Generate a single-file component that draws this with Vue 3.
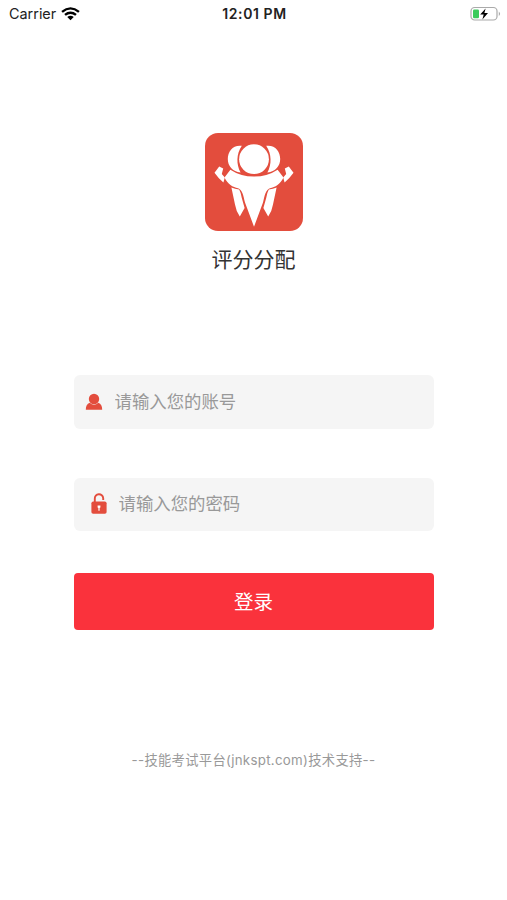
<script setup>
import { ref } from 'vue'

const account = ref('')
const password = ref('')
</script>

<template>
  <div class="screen">
    <header class="status">
      <div class="carrier">
        <span>Carrier</span>
        <svg class="wifi" viewBox="0 0 18 14" width="19" height="14" preserveAspectRatio="none">
          <path d="M1 4.8Q9-2 17 4.8M3.8 7.8Q9 3.6 14.2 7.8" fill="none" stroke="#000" stroke-width="2.3" />
          <path d="M5.9 10Q9 7.5 12.1 10L9 13.2Z" />
        </svg>
      </div>
      <span class="time">12:01 PM</span>
      <div class="power">
        <svg viewBox="0 0 32 16" width="32" height="16">
          <rect x="1" y="1.5" width="26" height="12.5" rx="3.6" fill="#fff" stroke="#aaa" stroke-width="1.2" />
          <path d="M28.8 5.4q2.6 2.3 0 4.6z" fill="#aaa" />
          <rect x="3" y="3.5" width="6" height="8.8" rx="1.3" fill="#3acb5b" />
          <path d="M15.6 2.4L10.2 8.4h3.5l-1.3 5 5.6-6.4h-3.6z" />
        </svg>
      </div>
    </header>

    <main class="content">
      <svg class="logo" viewBox="0 0 98 98" width="98" height="98">
        <rect width="98" height="98" rx="13" fill="#e34d3d" />
        <g fill="#fff">
          <circle cx="49" cy="26.2" r="14.9" />
          <g id="side">
            <path d="M36.8 12.8C28 11.6 22.8 18.4 22.8 26 22.8 33 27.5 38.6 35.6 39.6 31.2 31.5 31.2 21 36.8 12.8Z" />
            <path d="M9.5 39.7 14.2 33.6 18.2 35.4 16.8 41 19.8 44.4 18.4 49.4Q13.5 45.5 9.5 39.7Z" />
            <path d="M26.4 54.6Q30 56 34.2 56.6 36 60 36.8 65L39.6 75 34.8 83.4Q31 78 30 71.5Z" />
          </g>
          <use href="#side" transform="matrix(-1 0 0 1 98 0)" />
          <path d="M25.4 36.8Q35.5 43.6 49 43.6T72.6 36.8L78.5 44.4C75.5 51 70 54.2 65 55.2 60.5 56.8 59.6 63 58 69.5L49 93.8 40 69.5C38.4 63 37.5 56.8 33 55.2 28 54.2 22.5 51 19.5 44.4Z" />
        </g>
      </svg>
      <h1 class="title">评分分配</h1>

      <form class="form" @submit.prevent>
        <label class="field account">
          <svg viewBox="0 0 18 18" width="18" height="18" fill="#e34d3d">
            <circle cx="9" cy="6" r="5.2" />
            <path d="M.8 16.8C.8 13.2 2 10.8 4.7 9.8Q9 13.6 13.3 9.8C16 10.8 17.2 13.2 17.2 16.8Z" />
          </svg>
          <input v-model="account" type="text" placeholder="请输入您的账号" />
        </label>
        <label class="field password">
          <svg viewBox="0 0 16 22" width="16" height="22">
            <path d="M3.8 9V5.8a4.2 4.2 0 0 1 8.4-.6V7" fill="none" stroke="#e34d3d" stroke-width="1.9" />
            <rect x=".4" y="8.4" width="15.2" height="12.4" rx="1.8" fill="#e34d3d" />
            <path d="M6.6 12.4h2.8v2l-.8.7v2.7H7.4v-2.7l-.8-.7z" fill="#fff" />
          </svg>
          <input v-model="password" type="password" placeholder="请输入您的密码" />
        </label>
        <button class="login" type="submit">登录</button>
      </form>
    </main>

    <footer class="support">--技能考试平台(jnkspt.com)技术支持--</footer>
  </div>
</template>

<style>
body {
  margin: 0;
  background: #fff;
}
</style>

<style scoped>
.screen {
  width: 507px;
  height: 900px;
  box-sizing: border-box;
  display: flex;
  flex-direction: column;
  background: #fff;
  color: #333;
  font-family: Inter, "Noto Sans CJK SC", sans-serif;
}
.status {
  height: 27px;
  box-sizing: border-box;
  padding: 0 7px 0 9px;
  display: grid;
  grid-template-columns: 1fr auto 1fr;
  align-items: center;
  color: #222;
  font-size: 14.4px;
}
.carrier {
  display: flex;
  align-items: center;
  gap: 5px;
}
.wifi {
  display: block;
}
.time {
  font-weight: 600;
  font-size: 14px;
  letter-spacing: 0.6px;
}
.power {
  display: flex;
  justify-content: flex-end;
  margin-right: -2px;
}
.content {
  display: flex;
  flex-direction: column;
  align-items: center;
  padding-top: 106px;
}
.logo {
  display: block;
}
.title {
  margin: 13.5px 0 0;
  font-size: 21px;
  line-height: 30px;
  font-weight: 400;
}
.form {
  width: 360px;
  margin-top: 100px;
  display: flex;
  flex-direction: column;
}
.field {
  box-sizing: border-box;
  display: flex;
  align-items: center;
  background: #f5f5f5;
  border-radius: 6px;
}
.account {
  height: 54px;
  padding-left: 11px;
  gap: 12px;
}
.password {
  height: 53px;
  margin-top: 49px;
  padding-left: 17px;
  gap: 12px;
}
input {
  flex: 1;
  min-width: 0;
  padding: 0;
  border: 0;
  outline: 0;
  background: none;
  font: 17.4px/26px Inter, "Noto Sans CJK SC", sans-serif;
}
input::placeholder {
  color: #999;
  opacity: 1;
}
.login {
  height: 56.5px;
  margin-top: 42.5px;
  padding: 0;
  border: 0;
  border-radius: 4px;
  background: #fa323c;
  color: #fff;
  font: 19.5px/28px "Noto Sans CJK SC", sans-serif;
}
.support {
  margin-top: 120px;
  text-align: center;
  color: #999;
  font-size: 13.3px;
  letter-spacing: 0.3px;
  line-height: 20px;
}
</style>
